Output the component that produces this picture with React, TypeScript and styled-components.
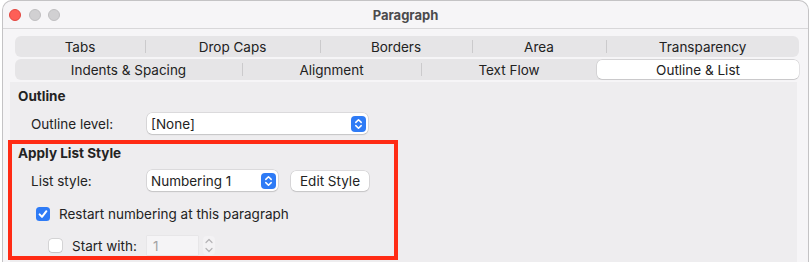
import React from "react";
import styled, { createGlobalStyle } from "styled-components";

const GlobalStyle = createGlobalStyle`
  html, body {
    margin: 0;
    padding: 0;
    background: #ffffff;
    overflow: hidden;
  }
  body {
    font-family: Inter, "Liberation Sans", Arial, sans-serif;
    font-size: 13.5px;
    color: #232323;
  }
`;

const Window = styled.div`
  margin-left: 2px;
  width: 807px;
  height: 262px;
  box-sizing: border-box;
  background: #f6f5f7;
  border: 1px solid #c4c3c5;
  border-bottom: none;
  border-radius: 10px 10px 0 0;
  overflow: hidden;
`;

const TitleBar = styled.div`
  height: 27px;
  border-bottom: 1px solid #d8d7d9;
  display: grid;
  grid-template-columns: 1fr auto 1fr;
  align-items: center;
`;

const Lights = styled.div`
  display: flex;
  gap: 7.5px;
  padding-left: 6px;
`;

const Light = styled.span<{ $red?: boolean }>`
  width: 12px;
  height: 12px;
  border-radius: 50%;
  box-sizing: border-box;
  background: ${(p) => (p.$red ? "#fe5f57" : "#d1d0d2")};
  border: 0.5px solid ${(p) => (p.$red ? "#e2463f" : "#bfbec0")};
`;

const Title = styled.div`
  font-weight: 700;
  color: #4b4a4c;
  font-size: 13px;
`;

const TabRow = styled.div<{ $cols: string; $top: number }>`
  display: grid;
  grid-template-columns: ${(p) => p.$cols};
  height: 21px;
  margin: ${(p) => p.$top}px 9px 0 12px;
  background: #e6e5e7;
  border-radius: 6px;
`;

const Tab = styled.div<{ $active?: boolean; $sep?: boolean }>`
  display: flex;
  align-items: center;
  justify-content: center;
  line-height: 16px;
  white-space: nowrap;
  color: #222;
  background-image: ${(p) =>
    p.$sep ? "linear-gradient(#cbcacc, #cbcacc)" : "none"};
  background-size: 1px 13px;
  background-position: left center;
  background-repeat: no-repeat;
  ${(p) =>
    p.$active &&
    `
    background: #ffffff;
    margin: 1px 0;
    border-radius: 5px;
    box-shadow: 0 0 0 0.5px rgba(0,0,0,0.14), 0 1px 1px rgba(0,0,0,0.06);
  `}
`;

const Page = styled.div`
  margin: 2px 11px 0 7px;
  height: 180px;
  background: #eeedef;
  padding: 6px 0 0 8px;
  box-sizing: border-box;
`;

const SectionTitle = styled.div`
  font-weight: 700;
  line-height: 16px;
`;

const FieldRow = styled.div<{ $top: number }>`
  display: flex;
  align-items: center;
  margin-top: ${(p) => p.$top}px;
  padding-left: 13px;
`;

const Label = styled.span`
  width: 116px;
  line-height: 16px;
`;

const Select = styled.div<{ $w: number }>`
  width: ${(p) => p.$w}px;
  height: 21px;
  box-sizing: border-box;
  background: #ffffff;
  border-radius: 5px;
  box-shadow: 0 0 0 0.5px rgba(0, 0, 0, 0.16), 0 1px 1.5px rgba(0, 0, 0, 0.1);
  display: flex;
  align-items: center;
  justify-content: space-between;
  padding: 0 2px 0 4px;
`;

const Button = styled.div`
  margin-left: 13px;
  width: 78px;
  height: 20px;
  box-sizing: border-box;
  background: #ffffff;
  border-radius: 5px;
  box-shadow: 0 0 0 0.5px rgba(0, 0, 0, 0.16), 0 1px 1.5px rgba(0, 0, 0, 0.1);
  display: flex;
  align-items: center;
  justify-content: center;
`;

const Highlight = styled.div`
  margin: 6px 0 0 -10px;
  width: 390px;
  box-sizing: border-box;
  border: 4px solid #ff2b14;
  padding: 1px 0 1px 6px;
`;

const CheckRow = styled.div<{ $top: number; $indent: number; $gap: number }>`
  display: flex;
  align-items: center;
  margin-top: ${(p) => p.$top}px;
  padding-left: ${(p) => p.$indent}px;
  gap: ${(p) => p.$gap}px;
  line-height: 16px;
`;

const Box = styled.span`
  width: 13px;
  height: 13px;
  box-sizing: border-box;
  background: #ffffff;
  border-radius: 3px;
  box-shadow: 0 0 0 0.5px rgba(0, 0, 0, 0.2), 0 0.5px 1px rgba(0, 0, 0, 0.08);
`;

const StartLabel = styled.span`
  width: 65px;
`;

const Spin = styled.div`
  display: flex;
  align-items: center;
  gap: 5px;
`;

const SpinField = styled.div`
  width: 51px;
  height: 19px;
  box-sizing: border-box;
  background: #f5f4f6;
  box-shadow: 0 0 0 0.5px rgba(0, 0, 0, 0.06);
  color: #a3a2a4;
  padding-left: 6px;
  display: flex;
  align-items: center;
`;

const SpinArrows = styled.div`
  width: 12px;
  height: 19px;
  border-radius: 4px;
  background: #f3f2f4;
  display: flex;
  align-items: center;
  justify-content: center;
`;

const BlueStepper = () => (
  <svg width="15" height="16" viewBox="0 0 15 16">
    <rect width="15" height="16" rx="4" fill="#2e7bf6" />
    <path
      d="M4.8 6.4 L7.5 3.8 L10.2 6.4 M4.8 9.6 L7.5 12.2 L10.2 9.6"
      fill="none"
      stroke="#fff"
      strokeWidth="1.5"
      strokeLinecap="round"
      strokeLinejoin="round"
    />
  </svg>
);

const CheckedBox = () => (
  <svg width="14" height="14" viewBox="0 0 14 14">
    <rect width="14" height="14" rx="3.5" fill="#2e7bf6" />
    <path
      d="M3.6 7.4 L6 9.9 L10.4 4.2"
      fill="none"
      stroke="#fff"
      strokeWidth="2"
      strokeLinecap="round"
      strokeLinejoin="round"
    />
  </svg>
);

const SpinGlyph = () => (
  <svg width="12" height="19" viewBox="0 0 12 19">
    <path
      d="M3 6.5 L6 3.5 L9 6.5 M3 12.5 L6 15.5 L9 12.5"
      fill="none"
      stroke="#b4b3b5"
      strokeWidth="1.2"
      strokeLinecap="round"
      strokeLinejoin="round"
    />
  </svg>
);

export default function App() {
  return (
    <>
      <GlobalStyle />
      <Window>
        <TitleBar>
          <Lights>
            <Light $red />
            <Light />
            <Light />
          </Lights>
          <Title>Paragraph</Title>
          <div />
        </TitleBar>

        <TabRow $top={7} $cols="130px 175px 152px 134px 1fr">
          <Tab>Tabs</Tab>
          <Tab $sep>Drop Caps</Tab>
          <Tab $sep>Borders</Tab>
          <Tab $sep>Area</Tab>
          <Tab $sep>Transparency</Tab>
        </TabRow>
        <TabRow $top={2} $cols="227px 179px 176px 1fr">
          <Tab>Indents &amp; Spacing</Tab>
          <Tab $sep>Alignment</Tab>
          <Tab $sep>Text Flow</Tab>
          <Tab $active>Outline &amp; List</Tab>
        </TabRow>

        <Page>
          <SectionTitle>Outline</SectionTitle>
          <FieldRow $top={9}>
            <Label>Outline level:</Label>
            <Select $w={221}>
              <span>[None]</span>
              <BlueStepper />
            </Select>
          </FieldRow>

          <Highlight>
            <SectionTitle>Apply List Style</SectionTitle>
            <FieldRow $top={9}>
              <Label>List style:</Label>
              <Select $w={131}>
                <span>Numbering 1</span>
                <BlueStepper />
              </Select>
              <Button>Edit Style</Button>
            </FieldRow>
            <CheckRow $top={15} $indent={18} $gap={9}>
              <CheckedBox />
              <span>Restart numbering at this paragraph</span>
            </CheckRow>
            <CheckRow $top={14} $indent={31} $gap={10}>
              <Box />
              <StartLabel>Start with:</StartLabel>
              <Spin>
                <SpinField>1</SpinField>
                <SpinArrows>
                  <SpinGlyph />
                </SpinArrows>
              </Spin>
            </CheckRow>
          </Highlight>
        </Page>
      </Window>
    </>
  );
}
